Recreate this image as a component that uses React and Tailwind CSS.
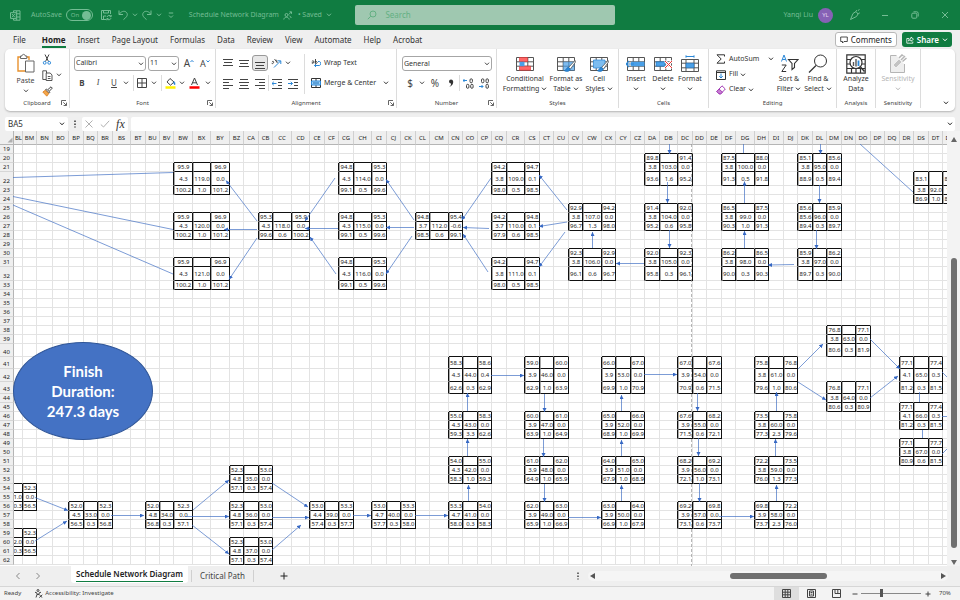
import React from "react";

const UI = "font-['Noto_Sans','Open_Sans',sans-serif]";

/* ---------- sheet geometry and data ---------- */

const ROW_HEADER_WIDTH = 14;
const COLUMN_WIDTHS = [
  9, 14, 16, 16, 15, 14, 15, 18, 15, 14, 14, 19, 18, 19, 14,
  15, 14, 19, 18, 15, 14, 15, 18, 15, 14, 15, 14, 19, 14, 15, 14, 15, 18, 15, 14, 15, 14, 19, 14, 15, 14,
  15, 18, 15, 14, 15, 14, 19, 14, 15, 14, 15, 14, 15, 14, 15, 14, 15, 14, 15, 14, 15,
];
const TABLE_WIDTH = COLUMN_WIDTHS.reduce((sum, w) => sum + w, ROW_HEADER_WIDTH);

const FIRST_ROW = 19;
const ROW_HEIGHTS = [
  9, 9, 9, 14, 9, 9, 9, 9, 9, 9, 9, 9, 9, 14, 9, 9, 9, 9, 9, 9, 9, 13, 12, 13, 12,
  9, 9, 9, 9, 9, 9, 9, 9, 9, 9, 9, 9, 9, 9, 9, 9, 9, 9, 9,
];

const toNumber = (name) =>
  (name.charCodeAt(0) - 64) * 26 + (name.charCodeAt(1) - 64);
const toName = (n) =>
  String.fromCharCode(64 + Math.floor((n - 1) / 26)) +
  String.fromCharCode(65 + ((n - 1) % 26));

const FIRST_COLUMN = toNumber("BL");
const COLUMNS = COLUMN_WIDTHS.map((width, i) => ({ name: toName(FIRST_COLUMN + i), width }));

const ACTIVITIES = [
  ["BW", 21, "95.9", "96.9", "4.3", "119.0", "0.0", "100.2", "1.0", "101.2"],
  ["BW", 26, "95.9", "96.9", "4.3", "120.0", "0.0", "100.2", "1.0", "101.2"],
  ["BW", 31, "95.9", "96.9", "4.3", "121.0", "0.0", "100.2", "1.0", "101.2"],
  ["CB", 26, "95.3", "95.9", "4.3", "118.0", "0.0", "99.6", "0.6", "100.2"],
  ["CG", 21, "94.8", "95.3", "4.3", "114.0", "0.0", "99.1", "0.5", "99.6"],
  ["CG", 26, "94.8", "95.3", "4.3", "115.0", "0.0", "99.1", "0.5", "99.6"],
  ["CG", 31, "94.8", "95.3", "4.3", "116.0", "0.0", "99.1", "0.5", "99.6"],
  ["CL", 26, "94.8", "95.4", "3.7", "112.0", "-0.6", "98.5", "0.6", "99.1"],
  ["CQ", 21, "94.2", "94.7", "3.8", "109.0", "0.1", "98.0", "0.5", "98.5"],
  ["CQ", 26, "94.2", "94.8", "3.7", "110.0", "0.1", "97.9", "0.6", "98.5"],
  ["CQ", 31, "94.2", "94.7", "3.8", "111.0", "0.1", "98.0", "0.5", "98.5"],
  ["CV", 25, "92.9", "94.2", "3.8", "107.0", "0.0", "96.7", "1.3", "98.0"],
  ["CV", 30, "92.3", "92.9", "3.8", "106.0", "0.0", "96.1", "0.6", "96.7"],
  ["DA", 20, "89.8", "91.4", "3.8", "103.0", "0.0", "93.6", "1.6", "95.2"],
  ["DA", 25, "91.4", "92.0", "3.8", "104.0", "0.0", "95.2", "0.6", "95.8"],
  ["DA", 30, "92.0", "92.3", "3.8", "105.0", "0.0", "95.8", "0.3", "96.1"],
  ["DF", 20, "87.5", "88.0", "3.8", "100.0", "0.0", "91.3", "0.5", "91.8"],
  ["DF", 25, "86.5", "87.5", "3.8", "99.0", "0.0", "90.3", "1.0", "91.3"],
  ["DF", 30, "86.2", "86.5", "3.8", "98.0", "0.0", "90.0", "0.3", "90.3"],
  ["DK", 20, "85.1", "85.6", "3.8", "95.0", "0.0", "88.9", "0.5", "89.4"],
  ["DK", 25, "85.6", "85.9", "85.6", "96.0", "0.0", "89.4", "0.3", "89.7"],
  ["DK", 30, "85.9", "86.2", "3.8", "97.0", "0.0", "89.7", "0.3", "90.0"],
  ["DS", 22, "83.1", "84.1", "3.8", "92.0", "1.0", "86.9", "1.0", "87.9"],
  ["CN", 41, "58.3", "58.6", "4.3", "44.0", "0.4", "62.6", "0.3", "62.9"],
  ["CN", 46, "55.0", "58.3", "4.3", "43.0", "0.0", "59.3", "3.3", "62.6"],
  ["CN", 51, "54.0", "55.0", "4.3", "42.0", "0.0", "58.3", "1.0", "59.3"],
  ["CN", 56, "53.3", "54.0", "4.7", "41.0", "0.0", "58.0", "0.3", "58.3"],
  ["CS", 41, "59.0", "60.0", "3.9", "46.0", "0.0", "62.9", "1.0", "63.9"],
  ["CS", 46, "60.0", "61.0", "3.9", "47.0", "0.0", "63.9", "1.0", "64.9"],
  ["CS", 51, "61.0", "62.0", "3.9", "48.0", "0.0", "64.9", "1.0", "65.9"],
  ["CS", 56, "62.0", "63.0", "3.9", "49.0", "0.0", "65.9", "1.0", "66.9"],
  ["CX", 41, "66.0", "67.0", "3.9", "53.0", "0.0", "69.9", "1.0", "70.9"],
  ["CX", 46, "65.0", "66.0", "3.9", "52.0", "0.0", "68.9", "1.0", "69.9"],
  ["CX", 51, "64.0", "65.0", "3.9", "51.0", "0.0", "67.9", "1.0", "68.9"],
  ["CX", 56, "63.0", "64.0", "3.9", "50.0", "0.0", "66.9", "1.0", "67.9"],
  ["DC", 41, "67.0", "67.6", "3.9", "54.0", "0.0", "70.9", "0.6", "71.5"],
  ["DC", 46, "67.6", "68.2", "3.9", "55.0", "0.0", "71.5", "0.6", "72.1"],
  ["DC", 51, "68.2", "69.2", "3.9", "56.0", "0.0", "72.1", "1.0", "73.1"],
  ["DC", 56, "69.2", "69.8", "3.9", "57.0", "0.0", "73.1", "0.6", "73.7"],
  ["DH", 41, "75.8", "76.8", "3.8", "61.0", "0.0", "79.6", "1.0", "80.6"],
  ["DH", 46, "73.5", "75.8", "3.8", "60.0", "0.0", "77.3", "2.3", "79.6"],
  ["DH", 51, "72.2", "73.5", "3.8", "59.0", "0.0", "76.0", "1.3", "77.3"],
  ["DH", 56, "69.8", "72.2", "3.9", "58.0", "0.0", "73.7", "2.3", "76.0"],
  ["DM", 38, "76.8", "77.1", "3.8", "63.0", "0.0", "80.6", "0.3", "81.9"],
  ["DM", 43, "76.8", "77.1", "3.8", "64.0", "0.0", "80.6", "0.3", "80.9"],
  ["DR", 41, "77.1", "77.4", "4.1", "65.0", "0.3", "81.2", "0.3", "81.5"],
  ["DR", 45, "77.1", "77.4", "4.1", "66.0", "0.3", "81.2", "0.3", "81.5"],
  ["DR", 49, "77.1", "77.7", "3.8", "67.0", "0.0", "80.9", "0.6", "81.5"],
  ["BK", 54, "", "52.3", "", "31.0", "0.0", "", "0.3", "56.5"],
  ["BK", 59, "", "52.3", "", "32.0", "0.0", "", "0.3", "56.5"],
  ["BP", 56, "52.0", "52.3", "4.5", "33.0", "0.0", "56.5", "0.3", "56.8"],
  ["BU", 56, "52.0", "52.3", "4.8", "34.0", "0.0", "56.8", "0.3", "57.1"],
  ["BZ", 52, "52.3", "53.0", "4.8", "35.0", "0.0", "57.1", "0.3", "57.4"],
  ["BZ", 56, "52.3", "53.0", "4.8", "36.0", "0.0", "57.1", "0.3", "57.4"],
  ["BZ", 60, "52.3", "53.0", "4.8", "37.0", "0.0", "57.1", "0.3", "57.4"],
  ["CE", 56, "53.0", "53.3", "4.4", "39.0", "0.0", "57.4", "0.3", "57.7"],
  ["CI", 56, "53.0", "53.3", "4.7", "40.0", "0.0", "57.7", "0.3", "58.0"],
];

const CELLS = {};
ACTIVITIES.forEach(([col, row, es, ef, dur, id, slack, ls, lag, lf]) => {
  const c = toNumber(col) - FIRST_COLUMN;
  [[es, "", ef], [dur, id, slack], [ls, lag, lf]].forEach((line, dy) =>
    line.forEach((value, dx) => {
      CELLS[`${c + dx}:${row + dy}`] = value;
    })
  );
});
const inBox = (c, r) => `${c}:${r}` in CELLS;

const LINES = [
  [13, 177.5, 173, 172.5], [13, 196.5, 173, 229.5], [13, 205, 173, 274],
  [743.5, 153, 743.5, 144], [860, 144, 913, 192],
  [919.5, 392, 919.5, 402], [922.5, 430, 922.5, 438],
  [942, 372, 947, 377], [942, 416.5, 947, 416.5], [942, 454, 947, 449],
];
const ARROWS = [
  [257, 221, 226, 180.5], [257, 229.5, 224, 229.5], [257, 238, 229, 279.5],
  [335, 178, 305, 221], [338, 228.5, 305, 228.5], [336, 274, 310, 237],
  [414, 220, 386, 179.5], [414, 227.5, 386, 227.5], [412, 236, 386, 274],
  [491, 178, 462, 220], [489, 228.5, 463, 227.5], [488, 272, 463, 234],
  [567, 210, 539, 175], [567, 222, 539, 226.5], [565, 232, 539, 267],
  [592.5, 248, 592.5, 232], [644, 263.5, 616, 263.5],
  [669.5, 144, 669.5, 154], [667.5, 182, 667.5, 203], [669.5, 230, 669.5, 248],
  [744.5, 203, 744.5, 181.5], [744.5, 248, 744.5, 231],
  [820.5, 144, 820.5, 154], [819.5, 185, 819.5, 203], [816.5, 230, 816.5, 249],
  [794, 264.5, 768, 265],
  [491, 375.5, 524, 375.5], [467.5, 411, 467.5, 393], [467.5, 456, 467.5, 439], [468.5, 501, 468.5, 485],
  [544.5, 394, 544.5, 412], [543.5, 439, 543.5, 457], [544.5, 484, 544.5, 502], [568, 517.5, 601, 517.5],
  [621.5, 411, 621.5, 395], [621.5, 456, 621.5, 440], [621.5, 501, 621.5, 485], [644, 374.5, 677, 374.5],
  [697.5, 393, 697.5, 411], [698.5, 438, 698.5, 456], [699.5, 483, 699.5, 502], [719, 516.5, 754, 516.5],
  [776.5, 411, 776.5, 392], [775.5, 456, 775.5, 439], [776.5, 501, 776.5, 485],
  [798, 369, 823, 344], [798, 382, 826, 400], [870, 339, 900, 369], [870, 398, 898, 376],
  [35, 497.5, 68, 510.5], [35, 541, 67, 521], [111, 515.5, 144, 515.5],
  [193, 510, 229, 480], [185, 516.5, 229, 516.5], [192, 525, 229, 554],
  [272, 483, 308, 507], [272, 517.5, 309, 517.5], [272, 550, 301, 525],
  [353, 515.5, 371, 515.5], [415, 515.5, 448, 515.5],
];

/* ---------- icons ---------- */

function Svg({ w = 16, h = 16, children, className = "" }) {
  return (
    <svg width={w} height={h} viewBox={`0 0 ${w} ${h}`} fill="none" stroke="currentColor" strokeWidth="1" className={`shrink-0 ${className}`} aria-hidden="true">
      {children}
    </svg>
  );
}
const Chevron = ({ className = "" }) => (
  <Svg w={6} h={4} className={className}><path d="M1 .7 3 2.8 5 .7" /></Svg>
);
const Launcher = () => (
  <Svg w={6} h={6}><path d="M.5 5V.5H5M2.3 2.3l3 3M5.5 2.6v2.9H2.6" strokeWidth=".9" /></Svg>
);
const Lines = ({ rows }) => (
  <Svg w={10} h={11}>
    {rows.map(([x, y, len], i) => <path key={i} d={`M${x} ${y}h${len}`} />)}
  </Svg>
);
const Grid = ({ children }) => (
  <Svg w={20} h={16}>
    <path d="M1.5 1.5h17v13h-17zM1.5 5.8h17M1.5 10.2h17M7.2 1.5v13M12.8 1.5v13" stroke="#555" />
    {children}
  </Svg>
);
const Brush = () => (
  <g>
    <path d="M19 4.5 12.5 11.5 14.5 13 19.5 6Z" fill="#fff" stroke="#555" strokeWidth=".8" />
    <path d="M12.3 11.3c-2 .2-1.6 2.6-4 3.4 2 1.4 5.600.8 6-1.800Z" fill="#2b88d8" stroke="#1b6fb8" strokeWidth=".6" />
  </g>
);

/* ---------- shared ribbon parts ---------- */

function Group({ label, width, launcher, children }) {
  return (
    <section aria-label={label} className={`flex shrink-0 flex-col ${width}`}>
      <div className="flex h-12 border-r border-[#dcdcdc]">{children}</div>
      <div className="flex h-[11px] items-end border-r border-[#dcdcdc] text-[6px] leading-[10px] text-[#444]">
        <span className="w-2" />
        <span className="flex-1 text-center">{label}</span>
        <span className="flex h-[10px] w-2 items-center text-[#555]">
          {launcher && <button type="button" aria-label={`${label} settings`} className="flex"><Launcher /></button>}
        </span>
      </div>
    </section>
  );
}
const Tool = ({ label, width = "w-4", children, className = "" }) => (
  <button type="button" aria-label={label} className={`flex h-4 shrink-0 items-center justify-center ${width} ${className}`}>
    {children}
  </button>
);
const Drop = ({ label, width = "w-2" }) => <Tool label={label} width={width}><Chevron /></Tool>;
const Sep = () => <span className="h-4 w-px shrink-0 bg-[#dcdcdc]" />;

function BigButton({ width, icon, lines, drop, muted }) {
  return (
    <button type="button" className={`flex shrink-0 flex-col items-center pt-[5px] text-[7px] leading-[10px] ${width} ${muted ? "text-[#b5b5b5]" : "text-[#333]"}`}>
      <span className="flex h-5 items-center">{icon}</span>
      <span className="whitespace-nowrap">{lines[0]}</span>
      <span className="flex h-[10px] items-center gap-[2px] whitespace-nowrap">
        {lines[1]}{drop && <Chevron />}
      </span>
    </button>
  );
}
function Combo({ label, value, width }) {
  return (
    <div className={`relative shrink-0 ${width}`}>
      <select aria-label={label} defaultValue={value} className="block h-[15px] w-full appearance-none rounded-[3px] border border-[#a6a6a6] bg-white px-px text-[7px] leading-[12px] text-[#333]">
        <option>{value}</option>
      </select>
      <Chevron className="pointer-events-none absolute right-[2px] top-[6px]" />
    </div>
  );
}

/* ---------- title bar ---------- */

function TitleBar() {
  return (
    <header className="flex h-[30px] shrink-0 items-center bg-[#107c41] text-[7px] text-[#74bd94]">
      <div className="flex flex-1 items-center pl-[10px]">
        <Svg w={11} h={11}>
          <path d="M3.500 2.500V.8H10v9.400H3.500V8.500M6.700.8v9.400M3.500 3.800H10M3.500 7H10" />
          <path d="M.5 2.700h5.800v5.700H.5z" fill="#107c41" /><path d="m2 4 2.800 3.200M4.800 4 2 7.200" />
        </Svg>
        <label className="ml-[10px] flex items-center gap-1">
          AutoSave
          <input type="checkbox" role="switch" defaultChecked className="peer sr-only" />
          <span className="flex h-3 w-[27px] items-center justify-between rounded-full border border-[#74bd94] pl-[4px] pr-px text-[6px]">
            On<span className="size-[9px] rounded-full bg-[#74bd94]" />
          </span>
        </label>
        <button type="button" aria-label="Save" className="ml-[7px]">
          <Svg w={12} h={12}><path d="M6 10.500H1.500v-9h9V5M3.500 1.500V4h5V1.500M3.500 10.500V7H6M7 8a2.200 2.200 0 0 1 4-.5M11.200 6v1.700H9.600M11 9.200a2.200 2.200 0 0 1-4 .5M6.800 11.300V9.600h1.600" /></Svg>
        </button>
        <button type="button" aria-label="Undo" className="ml-[5px]">
          <Svg w={12} h={12}><path d="M2 1.500V5.500H6M2.200 5.300C4 2.500 7 1.500 9 3c2 1.600 1.500 4-.5 5.800L6.500 10.600" /></Svg>
        </button>
        <Tool label="Undo history" width="w-3"><Chevron /></Tool>
        <button type="button" aria-label="Redo">
          <Svg w={12} h={12}><path d="M10 1.500V5.500H6M9.800 5.300C8 2.500 5 1.500 3 3c-2 1.600-1.500 4 .5 5.800L5.500 10.600" /></Svg>
        </button>
        <Tool label="Redo history" width="w-3"><Chevron /></Tool>
        <Tool label="Customize toolbar" width="w-3"><Svg w={6} h={7}><path d="M.8 1h4.400M1 3.500 3 5.500 5 3.500" /></Svg></Tool>
        <span className="ml-3 whitespace-nowrap">Schedule Network Diagram</span>
        <Svg w={9} h={9} className="ml-1"><circle cx="3.500" cy="4" r="1.500" /><path d="M.8 8.500c.3-3 5-3 5.400 0M6.500.8h2v2M8.300 1 5.800 3.500M6.500 5c1 .3 1.500 1 1.700 2" /></Svg>
        <button type="button" className="ml-[6px] flex items-center gap-1 whitespace-nowrap">• Saved <Chevron /></button>
      </div>
      <label className="flex h-5 w-[27%] shrink-0 items-center gap-2 rounded-[2px] bg-[#9fc8b0] px-3 text-[#63b083]">
        <Svg w={10} h={10}><circle cx="6" cy="4" r="3" /><path d="M3.800 6.200.8 9.200" /></Svg>
        <input type="search" aria-label="Search" placeholder="Search" className="w-full bg-transparent text-[8px] outline-none placeholder:text-[#63b083]" />
      </label>
      <div className="flex flex-1 items-center justify-end">
        <span>Yanqi Liu</span>
        <span className="ml-[5px] flex size-[15px] items-center justify-center rounded-full bg-[#8661b5] text-[6px] text-[#e0d3ef]">YL</span>
        <Tool label="Pen" width="w-6" className="ml-[10px]"><Svg w={12} h={12}><path d="M1.500 10.500 4 4.500 7 2.500 9 5 7.500 7.500 1.500 10.500M7 2.500 8 1M9 5l1.800-1.200M9 1.500l1.500-1" /></Svg></Tool>
        <Tool label="Minimize" width="w-9"><Svg w={8} h={8}><path d="M1 4.500h6" /></Svg></Tool>
        <Tool label="Restore" width="w-6"><Svg w={8} h={8}><rect x=".8" y="2.200" width="5" height="5" rx="1" /><path d="M2.500.8h3.200a1.500 1.500 0 0 1 1.500 1.500v3.200" /></Svg></Tool>
        <Tool label="Close" width="w-9" className="-mr-[3px]"><Svg w={8} h={8}><path d="m1 1 6 6M7 1 1 7" /></Svg></Tool>
      </div>
    </header>
  );
}

const MENU = ["Home", "Insert", "Page Layout", "Formulas", "Data", "Review", "View", "Automate", "Help", "Acrobat"];

function MenuBar() {
  return (
    <div className="flex h-[19px] shrink-0 items-center justify-between pl-[13px] pr-2 text-[8px] text-[#333]">
      <nav className="flex items-start gap-3 pt-[2px] leading-[13px]">
        <button type="button" className="mr-1">File</button>
        {MENU.map((name) => (
          <button key={name} type="button" className={name === "Home" ? "border-b-2 border-[#107c41] font-bold text-[#222]" : ""}>
            {name}
          </button>
        ))}
      </nav>
      <div className="flex gap-[5px]">
        <button type="button" className="flex h-[15px] items-center gap-[3px] rounded-[3px] border border-[#b8b8b8] bg-white px-[4px] text-[#222]">
          <Svg w={8} h={8}><path d="M.7 1h6.600v4.500H4L2.500 7V5.500H.7Z" strokeWidth=".8" /></Svg>Comments
        </button>
        <button type="button" className="flex h-[15px] items-center gap-[3px] rounded-[3px] bg-[#107c41] px-[4px] font-semibold text-white">
          <Svg w={8} h={8}><path d="M3 2.500H.8v4.700h6V5.500M2.500 5C2.700 3 4 2.500 5 2.500V1l2.500 2.200L5 5.300V4C4 4 3 4.200 2.500 5Z" strokeWidth=".8" /></Svg>
          Share<Chevron />
        </button>
      </div>
    </div>
  );
}

/* ---------- ribbon ---------- */

const LEFT = [[0, 1.5, 10], [0, 4.5, 6], [0, 7.5, 10], [0, 10.5, 6]];
const CENTER = [[1, 1.5, 8], [0, 4.5, 10], [1, 7.5, 8], [0, 10.5, 10]];
const RIGHT = [[0, 1.5, 10], [4, 4.5, 6], [0, 7.5, 10], [4, 10.5, 6]];

function Ribbon() {
  return (
    <div className="mx-[5px] flex h-[62px] shrink-0 overflow-hidden rounded-[5px] bg-white text-[#444] shadow-[0_1px_2px_rgba(0,0,0,0.25)]">
      <Group label="Clipboard" width="w-[65px]" launcher>
        <button type="button" className="flex w-9 flex-col items-center pt-1 pl-[5px] text-[7px] leading-[10px]">
          <Svg w={20} h={22} className="mb-px">
            <path d="M4.500 4H2v14h8M13 7V4h-2.500" stroke="#e8912d" strokeWidth="1.400" />
            <path d="M4.500 5.500V3h1.500C6 .8 9.200.8 9.200 3h1.600v2.500Z" fill="#fff" stroke="#666" />
            <path d="M9.500 8h8.500v11H9.500z" fill="#fff" stroke="#666" />
          </Svg>
          Paste<Chevron className="mt-[3px]" />
        </button>
        <div className="flex flex-col pt-[2px]">
          <Tool label="Cut" width="w-3"><Svg w={10} h={11}><path d="M3 .5 6.500 7.500M7 .5 3.500 7.500" /><circle cx="2.700" cy="8.800" r="1.400" stroke="#2b88d8" /><circle cx="7.200" cy="8.800" r="1.400" stroke="#2b88d8" /></Svg></Tool>
          <div className="flex">
            <Tool label="Copy" width="w-3"><Svg w={11} h={11}><path d="M4 9.500H.8V.8h3.700V3M4.200 3h4L10 5v5.500H4.200ZM5.800 6.500h2.700M5.800 8.500h2.700" strokeWidth=".9" /></Svg></Tool>
            <Drop label="Copy options" width="w-3" />
          </div>
          <Tool label="Format painter" width="w-3"><Svg w={11} h={11}><path d="M6 3.500 9 .8l1.300 1.300L7.500 5" strokeWidth="1" /><path d="M4.500 3 8 6.300l-1 1L3.500 4Z" fill="#fff" /><path d="M3.200 4.300.8 6l4 4.200 2-2.700Z" fill="#f3a64a" stroke="#d97b1c" strokeWidth=".8" /></Svg></Tool>
        </div>
      </Group>

      <Group label="Font" width="w-[146px]" launcher>
        <div className="flex flex-col gap-1 pl-[4px] pt-[6px]">
          <div className="flex items-center gap-[2px]">
            <Combo label="Font name" value="Calibri" width="w-[72px]" />
            <Combo label="Font size" value="11" width="w-[31px]" />
            <Tool label="Increase font size" width="w-4"><span className="text-[10px] leading-none">A</span><Svg w={4} h={8}><path d="m.5 3 1.500-1.600L3.500 3" stroke="#2b88d8" /></Svg></Tool>
            <Tool label="Decrease font size" width="w-3"><span className="text-[9px] leading-none">A</span><Svg w={4} h={8}><path d="m.5 1.400 1.500 1.600 1.500-1.600" stroke="#2b88d8" /></Svg></Tool>
          </div>
          <div className="flex items-center text-[8px]">
            <Tool label="Bold"><b>B</b></Tool>
            <Tool label="Italic"><i className="font-['Liberation_Serif',serif]">I</i></Tool>
            <Tool label="Underline"><u>U</u></Tool>
            <Drop label="Underline style" />
            <span className="w-[3px]" /><Sep />
            <Tool label="Borders"><Svg w={10} h={10}><path d="M.5.5h9v9h-9zM5 .5v9M.5 5h9" /></Svg></Tool>
            <Drop label="Border style" /><span className="w-[3px]" /><Sep />
            <Tool label="Fill colour"><Svg w={11} h={12}><path d="M5 1.500 9 5 5.500 8.200 2 5Z" /><path d="M9 4.500c1 1 1.200 2 .8 3.500L8.500 6Z" fill="#2b88d8" stroke="#2b88d8" strokeWidth=".6" /><path d="M.5 10.500h10" stroke="#fff200" strokeWidth="2.400" /></Svg></Tool>
            <Drop label="Fill colour options" />
            <Tool label="Font colour"><Svg w={11} h={12}><path d="M2.500 8 5.500 1 8.500 8M3.500 5.800h4" /><path d="M.5 10.500h10" stroke="#f00" strokeWidth="2.400" /></Svg></Tool>
            <Drop label="Font colour options" width="w-3" />
          </div>
        </div>
      </Group>

      <Group label="Alignment" width="w-[181px]" launcher>
        <div className="flex w-[88px] shrink-0 flex-col gap-1 pl-[4px] pt-[6px]">
          <div className="flex items-center">
            <Tool label="Top align"><Lines rows={[[0, 1.5, 10], [1, 4.5, 8], [0, 7.5, 10]]} /></Tool>
            <Tool label="Middle align"><Lines rows={[[0, 2.5, 10], [1, 5.5, 8], [0, 8.5, 10]]} /></Tool>
            <Tool label="Bottom align" className="rounded-[3px] border border-[#999] bg-[#e8e8e8]"><Lines rows={[[0, 4.5, 10], [1, 7.5, 8], [0, 10.5, 10]]} /></Tool>
            <Tool label="Orientation"><Svg w={11} h={11}><path d="M3 9.500 9.500 3M9.800 6V2.800H6.600" stroke="#2b88d8" /><path d="M1 4c1-1.500 2-.5 1.500.8S.8 6 1 4.800M3.500 1l3 4M4.500 2.500c1-1 2 .5 1 1.600" strokeWidth=".9" /></Svg></Tool>
            <Drop label="Orientation options" />
          </div>
          <div className="flex items-center">
            <Tool label="Align left"><Lines rows={LEFT} /></Tool>
            <Tool label="Centre"><Lines rows={CENTER} /></Tool>
            <Tool label="Align right"><Lines rows={RIGHT} /></Tool>
            <Sep />
            {["M4.500 5.500H0M1.800 3.800 0 5.500l1.800 1.700", "M0 5.500h4.500M2.700 3.800l1.800 1.700-1.800 1.700"].map((d, i) => (
              <Tool key={i} label={i ? "Increase indent" : "Decrease indent"}>
                <Svg w={10} h={11}><path d="M0 1.500h10M6 4.500h4M6 7.500h4M0 10.500h10" /><path d={d} stroke="#2b88d8" /></Svg>
              </Tool>
            ))}
          </div>
        </div>
        <span className="mt-[5px] h-10 w-px shrink-0 bg-[#dcdcdc]" />
        <div className="flex flex-1 flex-col gap-1 pl-[6px] pt-[6px] text-[7px] whitespace-nowrap text-[#333]">
          <button type="button" className="flex h-4 items-center gap-[3px]">
            <Svg w={10} h={11}><path d="M.8 3.500c1.500-1.500 2.500-.5 2 1.800M2.800 4.200C1 4 .4 5.500 1.800 5.500M4.500 1v4.500c2 .5 2.500-2.500 0-2" strokeWidth=".9" /><path d="M7 3.500h1.500c1.500 0 1.500 4 0 4H3.500M5 6 3.500 7.500 5 9" stroke="#2b88d8" /></Svg>
            Wrap Text
          </button>
          <div className="flex items-center">
            <button type="button" className="flex h-4 items-center gap-[3px]">
              <Svg w={10} h={10}><path d="M.5.5h9v9h-9zM5 .5V3M5 7v2.500" /><path d="M.5 3h9v4h-9z" fill="#9fd0f5" stroke="#2b88d8" /><path d="M2 5h6" stroke="#1b6fb8" /></Svg>
              Merge &amp; Center
            </button>
            <span className="w-[6px]" /><Drop label="Merge options" />
          </div>
        </div>
      </Group>

      <Group label="Number" width="w-[100px]" launcher>
        <div className="flex flex-col gap-1 pl-[5px] pt-[7px]">
          <Combo label="Number format" value="General" width="w-[90px]" />
          <div className="flex items-center text-[10px]">
            <Tool label="Currency">$</Tool>
            <Drop label="Currency options" />
            <span className="w-px" />
            <Tool label="Percent">%</Tool>
            <Tool label="Comma"><Svg w={6} h={9}><path d="M3 .5a2 2 0 1 0 0 4c.2 1.400-.6 2.600-1.800 3.500C4 7.300 5.500 5 5.200 2.600 5 1.200 4.200.5 3 .5Z" fill="#333" stroke="none" /></Svg></Tool>
            <Sep />
            {["M4 2.500H0M1.500 1 0 2.500 1.500 4", "M0 8.500h4M2.500 7 4 8.500 2.500 10"].map((d, i) => (
              <Tool key={i} label={i ? "Decrease decimal" : "Increase decimal"}>
                <Svg w={11} h={11}>
                  <path d={d} stroke="#2b88d8" />
                  {i ? <><rect x="2.500" y=".8" width="2.400" height="4" rx="1.200" /><rect x="7" y=".8" width="2.400" height="4" rx="1.200" /><rect x="7" y="6.300" width="2.400" height="4" rx="1.200" /></>
                    : <><rect x="7" y=".8" width="2.400" height="4" rx="1.200" /><rect x="3.500" y="6.300" width="2.400" height="4" rx="1.200" /><rect x="7.700" y="6.300" width="2.400" height="4" rx="1.200" /></>}
                </Svg>
              </Tool>
            ))}
          </div>
        </div>
      </Group>

      <Group label="Styles" width="w-[122px]">
        <span className="w-[5px]" />
        <BigButton width="w-[46px]" drop lines={["Conditional", "Formatting"]} icon={<Grid><path d="M4.500 1.500h8v4h-8zM4.500 10.200h11v4h-11z" fill="#f66" stroke="#d33" strokeWidth=".6" /><path d="M4.500 5.800h5v4.400h-5z" fill="#4aa0e8" stroke="none" /></Grid>} />
        <BigButton width="w-9" drop lines={["Format as", "Table"]} icon={<Grid><path d="M7.200 5.800h11.300v8.700H7.200z" fill="#4aa0e8" opacity=".7" stroke="none" /><Brush /></Grid>} />
        <BigButton width="w-[30px]" drop lines={["Cell", "Styles"]} icon={<Grid><path d="M4.500 4h11.500v8H4.500z" fill="#7dbdf0" stroke="#2b88d8" strokeWidth=".7" /><Brush /></Grid>} />
      </Group>

      <Group label="Cells" width="w-[90px]">
        <span className="w-[3px]" />
        <BigButton width="w-7" drop lines={["Insert"]} icon={<Grid><path d="M5 5.800h13.500v4.400H5z" fill="#4aa0e8" stroke="none" /><path d="M8 8H0M3 5 0 8l3 3" stroke="#2b88d8" strokeWidth="1.200" /></Grid>} />
        <BigButton width="w-[26px]" drop lines={["Delete"]} icon={<Grid><path d="M3 5.800h9v4.400H3z" fill="#4aa0e8" stroke="#1b6fb8" strokeWidth=".6" /><path d="m12 5 7 7M19 5l-7 7" stroke="#fff" strokeWidth="2.500" /><path d="m12 5 7 7M19 5l-7 7" stroke="#e33" /></Grid>} />
        <BigButton width="w-7" drop lines={["Format"]} icon={
          <Svg w={20} h={18}><path d="M1.500 4.500h17v12h-17zM1.500 8.200h17M1.500 12.800h17M6 4.500v12M14 4.500v12" stroke="#555" /><path d="M6 8.200h8v4.600H6z" fill="#4aa0e8" stroke="#1b6fb8" strokeWidth=".6" /><path d="M6 1.500h8M6 .3v2.400M14 .3v2.400" stroke="#2b88d8" /></Svg>
        } />
      </Group>

      <Group label="Editing" width="w-[128px]">
        <div className="flex w-[66px] flex-col pl-[7px] pt-[2px] text-[7px] text-[#333]">
          <div className="flex items-center justify-between">
            <button type="button" className="flex h-4 items-center gap-[3px]"><Svg w={10} h={10}><path d="M8.500 2.500V.8H1L5.200 5 1 9.200h7.500V7.500" /></Svg>AutoSum</button>
            <Drop label="AutoSum options" />
          </div>
          <button type="button" className="flex h-4 items-center gap-[2px]"><Svg w={10} h={10} className="mr-px"><path d="M.5.8h9v8.700h-9zM.5 2.500h9" /><path d="M5 3.500v4.500M3.200 6.200 5 8l1.800-1.800" stroke="#2b88d8" /></Svg>Fill<Chevron /></button>
          <button type="button" className="flex h-4 items-center gap-[2px]"><Svg w={10} h={10} className="mr-px"><path d="M6 .8 9.300 4 4.800 8.800H3L.8 6.500Z" stroke="#a33cb5" /><path d="M3 4 6.500 7.200 4.800 8.800H3L.8 6.500Z" fill="#c77fd3" stroke="#a33cb5" /></Svg>Clear<Chevron /></button>
        </div>
        <BigButton width="w-7" drop lines={["Sort &", "Filter"]} icon={
          <Svg w={19} h={20}><path d="m1.500 7.500 2.500-6.500 2.500 6.500M2.300 5.500h3.400" stroke="#2b88d8" /><path d="M1.800 11h4.400l-4.400 6.500h4.400" /><path d="M8.500 5.500h9.500l-3.500 4v4l-2.500 2V9.500Z" strokeWidth="1.100" /></Svg>
        } />
        <BigButton width="w-[30px]" drop lines={["Find &", "Select"]} icon={<Svg w={20} h={20}><circle cx="12.500" cy="7" r="6" /><path d="M8 11.500 1 18.500" strokeWidth="1.200" /></Svg>} />
      </Group>

      <Group label="Analysis" width="w-[39px]">
        <BigButton width="w-full" lines={["Analyze", "Data"]} icon={
          <Svg w={20} h={20}><path d="M.8.8h18.400v18.400H.8zM.8 5.500h18.400M.8 10h18.400M.8 14.500h18.400M5.500 14.500v4.700M10 14.500v4.700M14.500 14.500v4.700" strokeWidth="1.200" /><circle cx="10" cy="8.500" r="6" fill="#fff" strokeWidth="1.200" /><path d="m14.500 13 4 4.500" strokeWidth="1.500" /><path d="M7.500 12V8M10 12.500V5" stroke="#555" strokeWidth="1.400" /><path d="M12.500 12V6.500" stroke="#2b88d8" strokeWidth="1.800" /></Svg>
        } />
      </Group>

      <Group label="Sensitivity" width="w-[45px]">
        <BigButton width="w-full" drop muted lines={["Sensitivity"]} icon={
          <Svg w={20} h={20}><path d="M3 2h6l7 8v8H3z" fill="#eee" stroke="none" /><path d="M2.500 1.500h6M16.500 10v8.500h-14v-17" /><path d="m5 11 6-6 3 3-6 6Z" fill="#c4c4c4" stroke="#fff" strokeWidth=".6" /><path d="m11 4 3-3 1.500 1M13 6l4-4M14.500 7.500 18.500 4" strokeWidth="1.500" /></Svg>
        } />
      </Group>

      <div className="flex flex-1 items-end justify-end pb-[6px] pr-[6px]">
        <button type="button" aria-label="Collapse ribbon" className="text-[#222]"><Chevron /></button>
      </div>
    </div>
  );
}

/* ---------- formula bar ---------- */

function FormulaBar() {
  return (
    <div className="mt-[6px] flex h-[14px] shrink-0 items-stretch gap-px px-[5px] text-[#333]">
      <div className="flex w-[63px] items-center rounded-[2px] bg-white pl-[3px] pr-[3px]">
        <input aria-label="Name box" defaultValue="BA5" className="w-full min-w-0 bg-transparent text-[8px] leading-[12px] outline-none" />
        <button type="button" aria-label="Name list" className="text-[#222]"><Chevron /></button>
      </div>
      <span className="flex w-3 items-center justify-center"><Svg w={2} h={8}><path d="M1 .5v7" strokeWidth="1.500" strokeDasharray="1.500 1.500" /></Svg></span>
      <div className="flex w-[46px] items-center justify-around rounded-[2px] bg-white">
        <button type="button" aria-label="Cancel" className="text-[#b0b0b0]"><Svg w={8} h={8}><path d="m.5.5 7 7M7.500.5l-7 7" /></Svg></button>
        <button type="button" aria-label="Enter" className="text-[#b0b0b0]"><Svg w={10} h={8}><path d="M.8 4.500 3.500 7 9.200.8" /></Svg></button>
        <button type="button" className="font-['Liberation_Serif',serif] text-[12px] leading-none italic">fx</button>
      </div>
      <div className="ml-[2px] flex flex-1 items-center rounded-[2px] bg-white pr-[2px]">
        <input aria-label="Formula" className="flex-1 bg-transparent px-1 text-[7px] outline-none" />
        <button type="button" aria-label="Expand formula bar" className="text-[#222]"><Chevron /></button>
      </div>
    </div>
  );
}

/* ---------- sheet ---------- */

function Connectors() {
  return (
    <svg className="absolute inset-0 size-full" aria-hidden="true">
      <defs>
        <marker id="head" markerUnits="userSpaceOnUse" markerWidth="6" markerHeight="6" refX="4" refY="2" orient="auto">
          <path d="M0 0 4 2 0 4Z" fill="#3668c4" />
        </marker>
      </defs>
      <g transform="translate(-13 -144)" stroke="#4472c4" strokeWidth="1" strokeOpacity="0.7">
        <path d="M691.500 144v600" stroke="#999" strokeDasharray="3 2" />
        {LINES.map(([x1, y1, x2, y2], i) => <line key={i} x1={x1} y1={y1} x2={x2} y2={y2} />)}
        {ARROWS.map(([x1, y1, x2, y2], i) => <line key={i} x1={x1} y1={y1} x2={x2} y2={y2} markerEnd="url(#head)" />)}
      </g>
    </svg>
  );
}

function Sheet() {
  return (
    <div className="relative min-w-0 flex-1 overflow-hidden bg-white">
      <table className="table-fixed border-separate border-spacing-0 text-[6px] leading-[8px] text-[#222]" style={{ width: TABLE_WIDTH }}>
        <colgroup>
          <col style={{ width: ROW_HEADER_WIDTH }} />
          {COLUMNS.map((c) => <col key={c.name} style={{ width: c.width }} />)}
        </colgroup>
        <thead>
          <tr className="h-[14px] bg-[#efefef]">
            <th className="border-r border-b border-[#b5b5b5] p-0">
              <span className="flex justify-end pt-[4px]"><Svg w={6} h={6}><path d="M5.500.5v5h-5Z" fill="#b0b0b0" stroke="none" /></Svg></span>
            </th>
            {COLUMNS.map((c) => (
              <th key={c.name} scope="col" className="border-r border-b border-r-[#d0d0d0] border-b-[#b5b5b5] p-0 font-normal">
                <span className={`flex h-[13px] items-center ${c.name === "BL" ? "justify-end overflow-hidden" : "justify-center"}`}>{c.name}</span>
              </th>
            ))}
          </tr>
        </thead>
        <tbody>
          {ROW_HEIGHTS.map((height, i) => {
            const row = FIRST_ROW + i;
            return (
              <tr key={row} style={{ height }}>
                <th scope="row" className="border-r border-b border-r-[#b5b5b5] border-b-[#d6d6d6] bg-[#efefef] p-0 text-center align-bottom font-normal">{row}</th>
                {COLUMNS.map((c, x) => {
                  const mine = inBox(x, row);
                  const right = mine || inBox(x + 1, row) ? "border-r-[#111]" : "border-r-[#e3e3e3]";
                  const bottom = mine || inBox(x, row + 1) ? "border-b-[#111]" : "border-b-[#e3e3e3]";
                  const left = mine && c.name !== "BL" ? "border-l border-l-[#aaa]" : "";
                  return (
                    <td key={c.name} className={`border-r border-b p-0 align-middle ${right} ${bottom} ${left}`}>
                      {mine && (
                        <span className={`flex h-2 ${c.name === "BL" ? "justify-end overflow-hidden" : "justify-center"}`}>
                          {CELLS[`${x}:${row}`]}
                        </span>
                      )}
                    </td>
                  );
                })}
              </tr>
            );
          })}
        </tbody>
      </table>
      <div className="absolute top-[13px] right-0 bottom-0 left-[13px] overflow-hidden">
        <Connectors />
        <div className="absolute top-[198px] left-0 flex h-[98px] w-[140px] flex-col items-center justify-center rounded-[50%] border border-[#2f5597] bg-[#4472c4] text-center font-['Lato',sans-serif] text-[15px] leading-5 font-bold text-white">
          <span>Finish</span><span>Duration:</span><span>247.3 days</span>
        </div>
      </div>
    </div>
  );
}

function VerticalScroll() {
  return (
    <div className="flex w-[13px] shrink-0 flex-col items-center bg-[#f3f3f3] pt-[6px] pb-[1px] text-[#666]">
      <Svg w={6} h={5}><path d="M3 0 6 5H0Z" fill="currentColor" stroke="none" /></Svg>
      <div className="flex min-h-0 flex-1 flex-col items-center">
        <span className="flex-[38]" />
        <span className="w-[6px] flex-[95] rounded-full bg-[#707070]" />
        <span className="flex-[4]" />
      </div>
      <Svg w={6} h={5}><path d="M0 0H6L3 5Z" fill="currentColor" stroke="none" /></Svg>
    </div>
  );
}

function SheetTabs() {
  return (
    <div className="flex h-5 shrink-0 bg-[#efefef] text-[8px] text-[#444]">
      <div className="flex w-[71px] items-center gap-[14px] pl-[15px] text-[#888]">
        <button type="button" aria-label="Previous sheet"><Svg w={6} h={8}><path d="M4.500 1 1.500 4l3 3" /></Svg></button>
        <button type="button" aria-label="Next sheet"><Svg w={6} h={8}><path d="m1.500 1 3 3-3 3" /></Svg></button>
      </div>
      <button type="button" className="h-[17px] rounded-b-[3px] bg-white px-[5px] pb-px font-semibold whitespace-nowrap text-[#222]">
        <span className="block border-b border-[#107c41] leading-[14px]">Schedule Network Diagram</span>
      </button>
      <span className="my-1 ml-[3px] w-px bg-[#d0d0d0]" />
      <button type="button" className="px-2 whitespace-nowrap">Critical Path</button>
      <span className="my-1 w-px bg-[#d0d0d0]" />
      <button type="button" aria-label="New sheet" className="ml-[26px]"><Svg w={8} h={8}><path d="M4 .5v7M.5 4h7" stroke="#222" /></Svg></button>
      <div className="flex flex-1 items-center justify-end">
        <Svg w={2} h={8} className="mr-[9px]"><path d="M1 .5v7" strokeWidth="1.500" strokeDasharray="1.500 1.500" /></Svg>
        <div className="mr-3 flex h-[10px] w-[360px] items-center rounded-full bg-[#f5f5f5] px-[2px] text-[#555]">
          <Svg w={5} h={6}><path d="M5 0V6L0 3Z" fill="currentColor" stroke="none" /></Svg>
          <span className="flex-[135]" />
          <span className="h-[6px] flex-[96] rounded-full bg-[#707070]" />
          <span className="flex-[114]" />
          <Svg w={5} h={6}><path d="M0 0 5 3 0 6Z" fill="currentColor" stroke="none" /></Svg>
        </div>
      </div>
    </div>
  );
}

function StatusBar() {
  return (
    <footer className="flex h-[14px] shrink-0 items-center border-t border-[#d6d6d6] bg-[#f3f3f3] pl-[4px] text-[6px] text-[#444]">
      <span>Ready</span>
      <button type="button" className="ml-[13px] flex items-center gap-[2px]">
        <Svg w={9} h={9}><circle cx="4" cy="1.500" r="1" /><path d="M1 3.200 3 4v1.500L2 8.500M7 3.200 5 4v1.500M3 5.500h2" /><path d="m5.300 5.800 3 2.800M8.300 5.800l-3 2.800" /></Svg>
        Accessibility: Investigate
      </button>
      <div className="ml-auto flex h-full items-center">
        <button type="button" aria-label="Normal view" className="flex h-full w-[25px] items-center justify-center bg-[#dedede]"><Svg w={9} h={9}><path d="M.5.5h8v8h-8zM3.200.5v8M5.800.5v8M.5 3.200h8M.5 5.800h8" /></Svg></button>
        <button type="button" aria-label="Page layout view" className="flex w-[25px] justify-center"><Svg w={9} h={9}><path d="M.5.5h8v8h-8zM2.500 2h4v5h-4zM3.500 3.500h2M3.500 5.200h2" /></Svg></button>
        <button type="button" aria-label="Page break view" className="flex w-[25px] justify-center"><Svg w={9} h={9}><path d="M.5.5h8v8h-8zM3 .5v4h5.500M5.800.5v4" /></Svg></button>
        <button type="button" aria-label="Zoom out" className="ml-[3px]"><Svg w={6} h={6}><path d="M.5 3h5" /></Svg></button>
        <input type="range" aria-label="Zoom" min="10" max="190" defaultValue="70" className="mx-[3px] h-2 w-[60px] appearance-none bg-transparent [&::-webkit-slider-runnable-track]:h-px [&::-webkit-slider-runnable-track]:bg-[#888] [&::-webkit-slider-thumb]:-mt-[4px] [&::-webkit-slider-thumb]:h-2 [&::-webkit-slider-thumb]:w-[3px] [&::-webkit-slider-thumb]:appearance-none [&::-webkit-slider-thumb]:bg-[#555]" />
        <button type="button" aria-label="Zoom in" className="ml-px"><Svg w={6} h={6}><path d="M.5 3h5M3 .5v5" /></Svg></button>
        <span className="ml-2 w-[21px]">70%</span>
      </div>
    </footer>
  );
}

export default function App() {
  return (
    <div className={`flex h-screen flex-col overflow-hidden bg-[#efefef] ${UI}`}>
      <TitleBar />
      <MenuBar />
      <Ribbon />
      <FormulaBar />
      <main className="flex min-h-0 flex-1">
        <Sheet />
        <VerticalScroll />
      </main>
      <SheetTabs />
      <StatusBar />
    </div>
  );
}
